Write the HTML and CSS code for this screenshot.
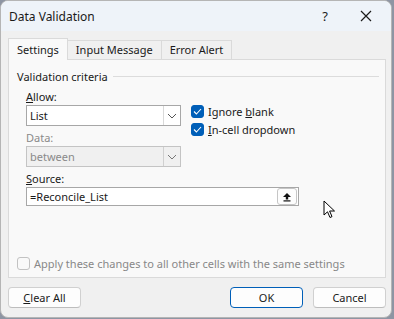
FILE: index.html
```html
<!DOCTYPE html>
<html lang="en">
<head>
  <meta charset="UTF-8">
  <title>Data Validation</title>
  <link rel="stylesheet" href="styles.css">
</head>
<body>

  <div class="window">
    <div class="titlebar">
      <span class="title">Data Validation</span>
      <span class="help">?</span>
      <svg class="close" width="12" height="12" viewBox="0 0 12 12">
        <path d="M1 1L11 11M11 1L1 11" stroke="#1a1a1a" stroke-width="1.2" fill="none"/>
      </svg>
    </div>

    <div class="content">
      <div class="tabs">
        <div class="tab active">Settings</div>
        <div class="tab">Input Message</div>
        <div class="tab">Error Alert</div>
      </div>

      <div class="panel">
        <div class="legend">
          <span>Validation criteria</span>
          <div class="rule"></div>
        </div>

        <div class="criteria">
          <div class="fields">
            <div class="label"><u>A</u>llow:</div>
            <div class="select">
              <span class="value">List</span>
              <span class="arrow">
                <svg width="10" height="6" viewBox="0 0 10 6"><path d="M1 1L5 5L9 1" stroke="#555" fill="none"/></svg>
              </span>
            </div>
            <div class="label disabled">Data:</div>
            <div class="select disabled">
              <span class="value">between</span>
              <span class="arrow">
                <svg width="10" height="6" viewBox="0 0 10 6"><path d="M1 1L5 5L9 1" stroke="#777" fill="none"/></svg>
              </span>
            </div>
          </div>

          <div class="checks">
            <label class="check">
              <span class="box checked">
                <svg width="9" height="7" viewBox="0 0 9 7"><path d="M1 3.5L3.4 6L8 1" stroke="#fff" stroke-width="1.1" fill="none"/></svg>
              </span>
              <span>Ignore <u>b</u>lank</span>
            </label>
            <label class="check">
              <span class="box checked">
                <svg width="9" height="7" viewBox="0 0 9 7"><path d="M1 3.5L3.4 6L8 1" stroke="#fff" stroke-width="1.1" fill="none"/></svg>
              </span>
              <span><u>I</u>n-cell dropdown</span>
            </label>
          </div>
        </div>

        <div class="source-row">
          <div class="source">
            <div class="label"><u>S</u>ource:</div>
            <div class="input">
              <span class="value">=Reconcile_List</span>
              <span class="collapse">
                <svg width="10" height="10" viewBox="0 0 10 10">
                  <path d="M5 1L9 5H6.2V7.5H3.8V5H1Z" fill="#111"/>
                  <rect x="1.5" y="8.3" width="7" height="1.2" fill="#111"/>
                </svg>
              </span>
            </div>
          </div>
          <svg class="pointer" width="13" height="19" viewBox="0 0 13 19">
            <path d="M1 1V15L4.5 11.8L7 17.5L9 16.6L6.6 11H11.5Z" fill="#fff" stroke="#000" stroke-width="1" stroke-linejoin="round"/>
          </svg>
        </div>

        <label class="check apply">
          <span class="box"></span>
          <span>Apply these changes to all other cells with the same settings</span>
        </label>
      </div>

      <div class="buttons">
        <button class="btn"><u>C</u>lear All</button>
        <div class="spacer"></div>
        <button class="btn default">OK</button>
        <button class="btn">Cancel</button>
      </div>
    </div>
  </div>

</body>
</html>
```

FILE: styles.css
```css
body {
  margin: 0;
  width: 394px;
  height: 319px;
  background-color: #8e95a3;
  font-family: "Noto Sans", "Open Sans", sans-serif;
  font-size: 11px;
  color: #1a1a1a;
}

.window {
  width: 390px;
  height: 316px;
  background: #f0f0f0;
  border: 1px solid #b5b5b5;
  border-radius: 8px;
  overflow: hidden;
}

.titlebar {
  height: 30px;
  background: #eef3f9;
  display: flex;
  align-items: center;
  padding-left: 8px;
}

.title {
  flex: 1;
  font-size: 12px;
}

.help {
  font-size: 13px;
  margin-right: 32px;
}

.close {
  margin-right: 19px;
}

.content {
  padding: 7px 5px 0 7px;
}

.tabs {
  display: flex;
  align-items: flex-end;
  height: 21px;
}

.tab {
  height: 18px;
  line-height: 18px;
  padding: 0 8px;
  border: 1px solid #dadada;
  border-bottom: none;
  background: #f0f0f0;
  margin-left: -1px;
}

.tab:first-child {
  margin-left: 0;
}

.tab.active {
  height: 21px;
  line-height: 22px;
  background: #f9f9f9;
  position: relative;
  z-index: 1;
  margin-bottom: -1px;
}

.panel {
  height: 217px;
  background: #f9f9f9;
  border: 1px solid #dadada;
  padding: 0 6px 0 8px;
}

.legend {
  display: flex;
  align-items: center;
  margin-top: 8px;
  height: 16px;
}

.rule {
  flex: 1;
  height: 1px;
  background: #dcdcdc;
  margin-left: 5px;
}

.criteria {
  display: flex;
  padding-left: 9px;
  margin-top: 5px;
}

.fields {
  width: 155px;
}

.label {
  height: 16px;
  line-height: 16px;
}

.label.disabled {
  color: #8a8a8a;
}

.select {
  display: flex;
  height: 19px;
  border: 1px solid #a7a7a7;
  background: #fff;
  margin: 0 0 4px;
}

.select .value {
  flex: 1;
  line-height: 19px;
  padding-left: 3px;
}

.select .arrow {
  width: 16px;
  border-left: 1px solid #d9d9d9;
  display: flex;
  align-items: center;
  justify-content: center;
}

.select.disabled {
  background: #f0f0f0;
  border-color: #c4c4c4;
  color: #8a8a8a;
}

.select.disabled .arrow {
  border-left-color: #d0d0d0;
}

.checks {
  margin-left: 10px;
  padding-top: 16px;
  display: flex;
  flex-direction: column;
  gap: 5px;
}

.check {
  display: flex;
  align-items: center;
  gap: 4px;
  height: 13px;
}

.box {
  width: 11px;
  height: 11px;
  border: 1px solid #8a8a8a;
  border-radius: 3px;
  background: #fff;
  display: flex;
  align-items: center;
  justify-content: center;
}

.box.checked {
  background: #005fb8;
  border-color: #005fb8;
}

.source-row {
  display: flex;
  padding-left: 9px;
}

.source {
  width: 273px;
}

.input {
  display: flex;
  align-items: center;
  height: 17px;
  border: 1px solid #a7a7a7;
  background: #fff;
}

.input .value {
  flex: 1;
  padding-left: 3px;
}

.collapse {
  width: 18px;
  height: 15px;
  border: 1px solid #c6c6c6;
  border-radius: 3px;
  background: #fdfdfd;
  display: flex;
  align-items: center;
  justify-content: center;
  margin-right: 1px;
}

.pointer {
  margin: 29px 0 0 24px;
}

.apply {
  color: #888;
  margin-top: 38px;
}

.apply .box {
  border-color: #c2c2c2;
  background: #f9f9f9;
}

.buttons {
  display: flex;
  margin-top: 9px;
  gap: 10px;
}

.spacer {
  flex: 1;
}

.btn {
  width: 73px;
  height: 21px;
  font-family: inherit;
  font-size: 11px;
  color: #1a1a1a;
  background: #fdfdfd;
  border: 1px solid #d0d0d0;
  border-bottom-color: #bdbdbd;
  border-radius: 4px;
  padding: 0;
}

.btn.default {
  border: 1px solid #005fb8;
}
```
